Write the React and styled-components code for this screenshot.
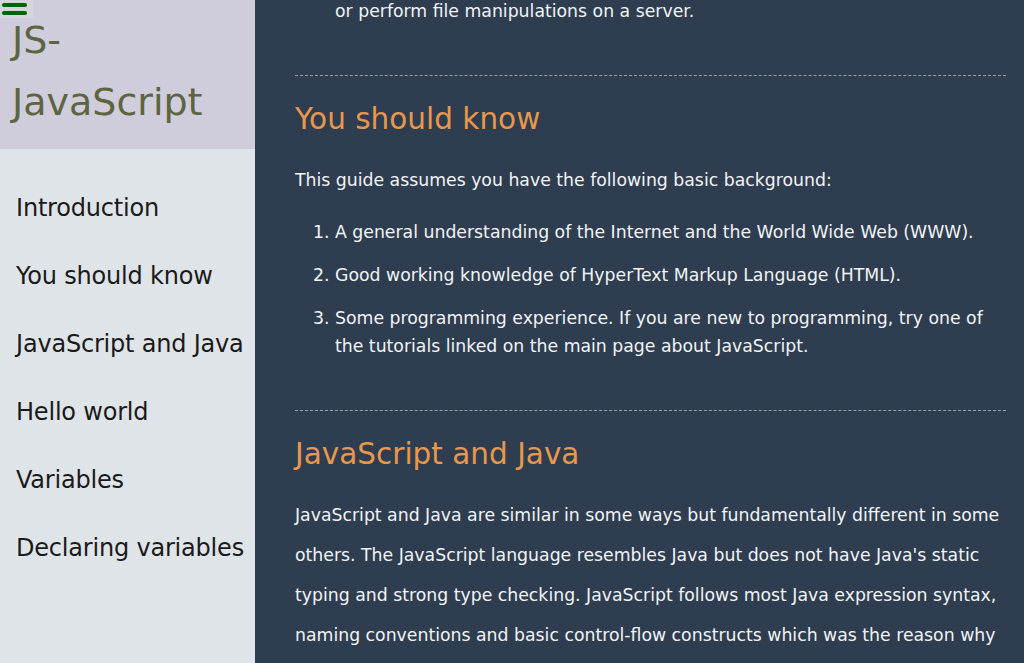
import React from "react";
import styled, { createGlobalStyle } from "styled-components";

const GlobalStyle = createGlobalStyle`
  html, body {
    margin: 0;
    padding: 0;
    height: 100%;
    overflow: hidden;
  }
  body {
    font-family: "DejaVu Sans", Verdana, sans-serif;
  }
  * {
    box-sizing: border-box;
  }
`;

const navItems = [
  "Introduction",
  "You should know",
  "JavaScript and Java",
  "Hello world",
  "Variables",
  "Declaring variables",
];

const App = () => {
  return (
    <Page>
      <GlobalStyle />
      <Sidebar>
        <SideHeader>
          <MenuButton aria-label="menu">
            <Bar />
            <Bar />
          </MenuButton>
          <Title>JS-JavaScript</Title>
        </SideHeader>
        <Nav>
          {navItems.map((item) => (
            <NavLink key={item} href="#">
              {item}
            </NavLink>
          ))}
        </Nav>
      </Sidebar>

      <Main>
        <Content>
          {/* tail of the previous section */}
          <Continued>or perform file manipulations on a server.</Continued>

          <Divider />
          <Section>
            <Heading>You should know</Heading>
            <Lead>This guide assumes you have the following basic background:</Lead>
            <List>
              <Item>
                A general understanding of the Internet and the World Wide Web
                (WWW).
              </Item>
              <Item>
                Good working knowledge of HyperText Markup Language (HTML).
              </Item>
              <Item>
                Some programming experience. If you are new to programming, try
                one of the tutorials linked on the main page about JavaScript.
              </Item>
            </List>
          </Section>

          <Divider />
          <Section>
            <Heading>JavaScript and Java</Heading>
            <Text>
              JavaScript and Java are similar in some ways but fundamentally
              different in some others. The JavaScript language resembles Java
              but does not have Java's static typing and strong type checking.
              JavaScript follows most Java expression syntax, naming conventions
              and basic control-flow constructs which was the reason why it was
              renamed from LiveScript to JavaScript.
            </Text>
          </Section>
        </Content>
      </Main>
    </Page>
  );
};

const Page = styled.div`
  display: flex;
  height: 100vh;
  overflow: hidden;
`;

const Sidebar = styled.aside`
  flex: 0 0 255px;
  width: 255px;
  min-width: 0;
  overflow: hidden;
  display: flex;
  flex-direction: column;
  background-color: #dfe4e8;
`;

const SideHeader = styled.header`
  position: relative;
  flex: 0 0 149px;
  padding: 9px 0 0 12px;
  background-color: #cfccdc;
`;

const MenuButton = styled.button`
  position: absolute;
  top: 0;
  left: 0;
  width: 33px;
  height: 18px;
  padding: 3px 0 0 2px;
  border: none;
  display: flex;
  flex-direction: column;
  gap: 4px;
  background-color: #d6d5de;
  cursor: pointer;
`;

const Bar = styled.span`
  display: block;
  width: 25px;
  height: 4px;
  border-radius: 2px;
  background-color: #006400;
`;

const Title = styled.h1`
  margin: 0;
  width: 200px;
  font-size: 38px;
  font-weight: normal;
  line-height: 62px;
  color: #5d6440;
`;

const Nav = styled.nav`
  display: flex;
  flex-direction: column;
  padding-top: 25px;
`;

const NavLink = styled.a`
  display: block;
  padding: 20px 0 20px 16px;
  font-size: 24px;
  line-height: 28px;
  color: #1a1a1a;
  text-decoration: none;
  white-space: nowrap;
  letter-spacing: -0.2px;
`;

const Main = styled.main`
  flex: 1;
  min-width: 0;
  overflow: hidden;
  padding: 0 18px 0 40px;
  background-color: #2e3d4f;
  color: #f2f4f6;
  font-size: 17.3px;
`;

const Content = styled.div`
  margin-top: -3px;
`;

const Continued = styled.p`
  margin: 0;
  padding-left: 40px;
  line-height: 28px;
`;

const Divider = styled.hr`
  margin: 50px 0 0;
  border: none;
  border-top: 1px dashed #9aa0a8;
`;

const Section = styled.section`
  padding-top: 25px;
`;

const Heading = styled.h2`
  margin: 0 0 23px;
  font-size: 29.5px;
  font-weight: normal;
  line-height: 36px;
  color: #e8984c;
`;

const Lead = styled.p`
  margin: 0;
  line-height: 40px;
`;

const Text = styled.p`
  margin: 0;
  line-height: 40px;
`;

const List = styled.ol`
  margin: 18px 0 0;
  padding-left: 40px;
`;

const Item = styled.li`
  line-height: 28px;

  & + & {
    margin-top: 15px;
  }
`;

export default App;
